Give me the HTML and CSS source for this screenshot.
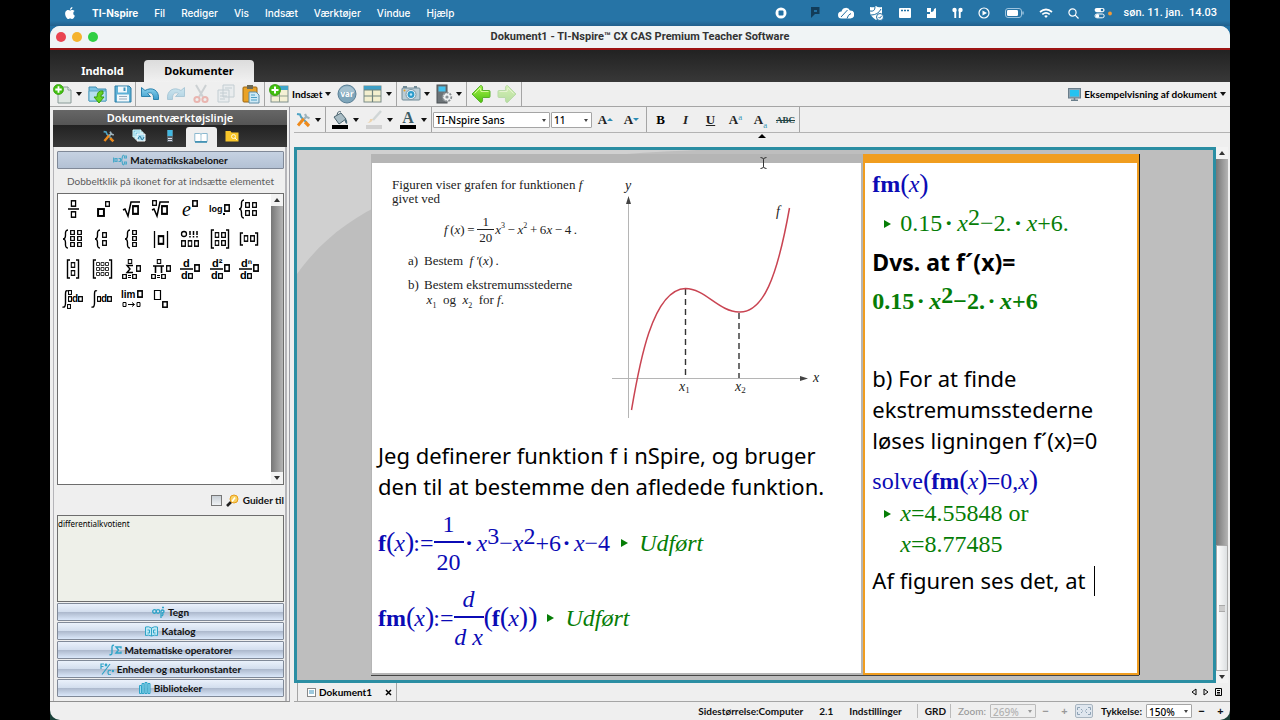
FILE: index.html
```html
<!DOCTYPE html>
<html lang="da">
<head>
<meta charset="utf-8">
<title>Dokument1 - TI-Nspire™ CX CAS Premium Teacher Software</title>
<link rel="stylesheet" href="styles.css">
</head>
<body>
<svg class="defs" aria-hidden="true">
  <defs>
    <symbol id="box" viewBox="0 0 6 7" preserveAspectRatio="none"><rect x="0.8" y="0.8" width="4.4" height="5.4" fill="#fff" stroke="#000" stroke-width="1.5"/></symbol>
    <linearGradient id="sky" x1="0" y1="0" x2="0" y2="1"><stop offset="0" stop-color="#8fd3ee"/><stop offset="1" stop-color="#3a9ccb"/></linearGradient>
    <linearGradient id="leaf" x1="0" y1="0" x2="0" y2="1"><stop offset="0" stop-color="#a5f34c"/><stop offset="1" stop-color="#4fc00f"/></linearGradient>
    <symbol id="plus" viewBox="0 0 12 12"><circle cx="6" cy="6" r="5.5" fill="#42c00f" stroke="#2e9a08" stroke-width=".8"/><path d="M6 2.5v7M2.5 6h7" stroke="#fff" stroke-width="2"/></symbol>
    <symbol id="tools" viewBox="0 0 16 16"><path d="M2 2l3 0.5 1 2.5 6 6" fill="none" stroke="#4fa3c4" stroke-width="2"/><path d="M10 10l4 4" stroke="#ee8a1c" stroke-width="3.2"/><path d="M9 6.500L3 13.500" stroke="#ee8a1c" stroke-width="3"/><path d="M9 7l3-3M10 2l1.500 3 3 1.200" fill="none" stroke="#9fb4bd" stroke-width="2.200"/></symbol>
    <symbol id="arrow" viewBox="0 0 20 20"><path d="M1 10L9.500 1.500Q12 1 11.500 6.500H18q1 0 1 1v5q0 1-1 1H11.500Q12 19 9.500 18.500z" fill="url(#leaf)" stroke="#58b32c" stroke-width="1" stroke-linejoin="round"/><path d="M3.500 9.500L9 4l1 3.500h7.500" stroke="#d5fb9a" fill="none"/></symbol>
    <symbol id="undo" viewBox="0 0 20 20"><path d="M1.500 3.500v9h9L7.500 9.500C10 8 14 8.500 13.500 15.500H18.500C19.500 6 12 2.500 5 6.500z" fill="url(#sky)" stroke="#2c82ad" stroke-width="1" stroke-linejoin="round"/></symbol>
  </defs>
</svg>

<div class="desktop">
  <nav class="menubar" aria-label="Menulinje">
    <svg class="apple" viewBox="0 0 24 24" width="12" height="12" fill="#fff"><path d="M12.152 6.896c-.948 0-2.415-1.078-3.96-1.04-2.04.027-3.91 1.183-4.961 3.014-2.117 3.675-.546 9.103 1.519 12.09 1.013 1.454 2.208 3.09 3.792 3.039 1.52-.065 2.09-.987 3.935-.987 1.831 0 2.35.987 3.96.948 1.637-.026 2.676-1.48 3.676-2.948 1.156-1.688 1.636-3.325 1.662-3.415-.039-.013-3.182-1.221-3.22-4.857-.026-3.04 2.48-4.494 2.597-4.559-1.429-2.09-3.623-2.324-4.39-2.376-2-.156-3.675 1.09-4.61 1.09zM15.53 3.83c.843-1.012 1.4-2.427 1.245-3.83-1.207.052-2.662.805-3.532 1.818-.78.896-1.454 2.338-1.273 3.714 1.338.104 2.715-.688 3.559-1.701"/></svg>
    <button class="menu menu-app">TI-Nspire</button>
    <button class="menu">Fil</button>
    <button class="menu">Rediger</button>
    <button class="menu">Vis</button>
    <button class="menu">Indsæt</button>
    <button class="menu">Værktøjer</button>
    <button class="menu">Vindue</button>
    <button class="menu">Hjælp</button>
    <div class="tray">
      <svg width="22" height="14" viewBox="0 0 22 14"><circle cx="11" cy="7" r="5.500" fill="#fff"/><rect x="8.500" y="4.500" width="5" height="5" rx="1" fill="#2270a3"/></svg>
      <svg width="16" height="14" viewBox="0 0 16 14"><path d="M4 1h8.500v7H8l-4 4z" fill="#123c59"/><path d="M7 4h3v2H7z" fill="#2270a3"/></svg>
      <svg width="16" height="14" viewBox="0 0 16 14"><path d="M3.500 12.500a3.500 3.500 0 0 1 0-7A4.500 4.500 0 0 1 12 4.500a4 4 0 0 1 .5 8z" fill="#fff"/><path d="M3 11l6.500-7M9 12.500q1-4 4-5" stroke="#2270a3" fill="none"/></svg>
      <svg width="15" height="16" viewBox="0 0 15 16"><path d="M1 2q5 1 6-1 2 2 6 1v7q-2 4-6 6-6-4-6-8z" fill="#fff"/><path d="M1 6q5 1 5-4M2 10q7 0 10-6" fill="none" stroke="#2270a3"/><circle cx="11" cy="12" r="3.500" fill="#fff" stroke="#2270a3"/><path d="M9.500 12l1.200 1.200 2-2.400" stroke="#2270a3" fill="none"/></svg>
      <svg width="12" height="12" viewBox="0 0 12 12"><rect y="1" width="12" height="10" rx="1" fill="#fff"/><path d="M2 3.500h2M5 3.500h2M8 3.500h2" stroke="#2270a3" stroke-width="1.500"/></svg>
      <svg width="11" height="12" viewBox="0 0 11 12"><path d="M1 1h4v4q3 0 3-3l2-1v10H1V7h3V5H1z" fill="#fff"/></svg>
      <svg width="11" height="12" viewBox="0 0 11 12" fill="#fff"><circle cx="2.500" cy="3" r="2.200"/><circle cx="8.500" cy="3" r="2.200"/><path d="M2.300 3h1.900v8H2.300zM6.800 3h1.900v8H6.800z"/></svg>
      <svg width="12" height="12" viewBox="0 0 12 12"><circle cx="6" cy="6" r="5" fill="none" stroke="#fff" stroke-width="1.200"/><path d="M4.500 3.500L9 6 4.500 8.500z" fill="#fff"/></svg>
      <svg width="19" height="10" viewBox="0 0 19 10"><rect x=".5" y=".5" width="16" height="9" rx="2.500" fill="none" stroke="#9cc3de"/><rect x="2" y="2" width="11" height="6" rx="1.200" fill="#fff"/><path d="M18 3.500v3" stroke="#9cc3de" stroke-width="1.400"/></svg>
      <svg width="14" height="11" viewBox="0 0 14 11" fill="none" stroke="#fff" stroke-width="1.700"><path d="M1 4q6-5 12 0M3.300 6.300q3.700-3 7.400 0"/><path d="M7 10L5.200 8q1.800-1.300 3.600 0z" fill="#fff" stroke="none"/></svg>
      <svg width="11" height="11" viewBox="0 0 11 11" fill="none" stroke="#fff" stroke-width="1.200"><circle cx="4.500" cy="4.500" r="3.600"/><path d="M7.200 7.200L10.500 10.500"/></svg>
      <svg width="18" height="12" viewBox="0 0 18 12"><rect x=".6" y="1" width="10" height="4.200" rx="2.100" fill="#fff"/><rect x="1" y="7" width="9.200" height="3.800" rx="1.900" fill="none" stroke="#fff"/><circle cx="8" cy="3" r="1.300" fill="#2270a3"/><circle cx="3.500" cy="8.900" r="1.800" fill="#fff"/><circle cx="16" cy="6.500" r="1.900" fill="#f09a38"/></svg>
      <time class="clock">søn. 11. jan.&nbsp; 14.03</time>
    </div>
  </nav>

  <div class="window">
    <header class="titlebar">
      <div class="lights"><i class="light light-close"></i><i class="light light-min"></i><i class="light light-max"></i></div>
      <h1 class="title">Dokument1 - TI-Nspire™ CX CAS Premium Teacher Software</h1>
    </header>
    <div class="tabs">
      <button class="tab">Indhold</button>
      <button class="tab tab-on">Dokumenter</button>
    </div>

    <div class="toolbar">
      <div class="group">
        <button aria-label="Ny"><svg width="20" height="20" viewBox="0 0 20 20"><path d="M5 3h10l3 3v13H5z" fill="#dfe7e3" stroke="#8a9a98"/><path d="M15 3v3h3" fill="#fff" stroke="#8a9a98"/><use href="#plus" width="11" height="11"/></svg></button><i class="caret"></i>
        <button class="gap" aria-label="Åbn"><svg width="20" height="20" viewBox="0 0 20 20"><path d="M1 3h7l1.500 2H18v12H1z" fill="#7cc4e3" stroke="#3f8db0"/><path d="M1 7h17v10H1z" fill="#b5dff0" stroke="#5aa5c6"/><path d="M15 7q-6-1-6 6H6l5 6 5-6h-3q-.5-3 2-3z" fill="#67d321" stroke="#3b9d10"/></svg></button>
        <button class="gap" aria-label="Gem"><svg width="18" height="20" viewBox="0 0 18 20"><path d="M1 2h14l2 2v14H1z" fill="#5eb1d6" stroke="#2c7ca5"/><rect x="4" y="2.500" width="9" height="6" fill="#f2f8fb"/><rect x="9.500" y="3.500" width="2" height="3.500" fill="#3c93bd"/><rect x="3" y="10.500" width="12" height="7" fill="#f2f8fb"/><path d="M5 12.500h8M5 15h8" stroke="#9ab"/></svg></button>
      </div>
      <div class="group group-wide">
        <button aria-label="Fortryd"><svg width="20" height="20"><use href="#undo"/></svg></button>
        <button class="faded" aria-label="Gentag"><svg width="20" height="20" viewBox="0 0 20 20"><g transform="matrix(-1 0 0 1 20 0)"><use href="#undo" width="20" height="20"/></g></svg></button>
        <button class="faded" aria-label="Klip"><svg width="18" height="20" viewBox="0 0 18 20" fill="none"><path d="M4 1l7 12M14 1L7 13" stroke="#8d9aa0" stroke-width="2"/><circle cx="5" cy="15.500" r="2.600" stroke="#e04c3c" stroke-width="2"/><circle cx="13" cy="15.500" r="2.600" stroke="#e04c3c" stroke-width="2"/></svg></button>
        <button class="faded" aria-label="Kopier"><svg width="20" height="20" viewBox="0 0 20 20"><path d="M7 1h11v12H7zM2 6h11v12H2z" fill="#dfe9ee" stroke="#7590a0"/><path d="M4 9h7M4 12h7M4 15h5M9 4h7" stroke="#7590a0"/></svg></button>
        <button aria-label="Sæt ind"><svg width="18" height="20" viewBox="0 0 18 20"><rect x="1" y="3" width="14" height="15" rx="1" fill="#e9a227" stroke="#9a6512"/><rect x="5" y="1" width="6" height="4" fill="#6d6a55"/><path d="M7 8h7l3 3v8H7z" fill="#cfe9f5" stroke="#5c8eaa"/><path d="M9 11h4M9 13.500h6M9 16h6" stroke="#4c9fc5"/></svg></button>
      </div>
      <div class="group">
        <button class="labelled"><svg width="20" height="20" viewBox="0 0 20 20"><rect x="2" y="2" width="17" height="16" fill="#f4f0d4" stroke="#7f8f8c"/><path d="M2 2h17v4H2z" fill="#3fa5cb"/><path d="M10.500 6v12M2 12h17" stroke="#8f9f8c"/><use href="#plus" width="12" height="12"/></svg>Indsæt</button><i class="caret"></i>
        <button class="gap" aria-label="Variabler"><svg width="20" height="20" viewBox="0 0 20 20"><circle cx="10" cy="10" r="9" fill="#7fa6bb" stroke="#5a7f95"/><path d="M2 8a8.500 8.500 0 0 1 16 0z" fill="#a3c0cf"/><text x="10" y="13" text-anchor="middle" class="svg-var">var</text></svg></button>
        <button class="gap" aria-label="Sidelayout"><svg width="20" height="20" viewBox="0 0 20 20"><rect x="1" y="2" width="17" height="16" fill="#f3efcf" stroke="#7b8c88"/><path d="M1 2h17v4H1z" fill="#3f9fc5"/><path d="M9.500 6v12M1 12h17M1 6h17" stroke="#6f837f" stroke-width="1.200"/></svg></button><i class="caret"></i>
      </div>
      <div class="group">
        <button aria-label="Skærmbillede"><svg width="20" height="20" viewBox="0 0 20 20"><rect x="1" y="4" width="18" height="12" rx="1" fill="#bccdd5" stroke="#6f8a97"/><path d="M2 3h4M13 3h3" stroke="#6f8a97" stroke-width="2"/><circle cx="10" cy="10.500" r="5" fill="#e8f1f5" stroke="#7d96a3"/><circle cx="10" cy="10.500" r="3.400" fill="#2d9ccb"/><circle cx="10" cy="10.500" r="1.200" fill="#bfe7f8"/><circle cx="3.500" cy="6.500" r="1" fill="#e9a227"/></svg></button><i class="caret"></i>
        <button class="gap" aria-label="Håndholdt"><svg width="17" height="20" viewBox="0 0 17 20"><rect x="1" y="1" width="10" height="18" fill="#6c7377" stroke="#4a5054"/><rect x="2.500" y="2.500" width="7" height="5" fill="#41c1ee"/><circle cx="11" cy="13" r="4.300" fill="#eef1f2" stroke="#888e91" stroke-width="1.800" stroke-dasharray="2 1.200"/><circle cx="11" cy="13" r="1.600" fill="#8b9296"/></svg></button><i class="caret"></i>
      </div>
      <div class="group">
        <button aria-label="Forrige"><svg width="20" height="20"><use href="#arrow"/></svg></button>
        <button class="gap faded" aria-label="Næste"><svg width="20" height="20" viewBox="0 0 20 20"><g transform="matrix(-1 0 0 1 20 0)"><use href="#arrow" width="20" height="20"/></g></svg></button>
      </div>
      <button class="labelled preview"><svg width="13" height="13" viewBox="0 0 13 13"><rect x=".5" y=".5" width="12" height="9.500" fill="#8fa5b3" stroke="#6a7e8b"/><rect x="2" y="2" width="9" height="6.500" fill="#25c2f0"/><path d="M3 12.200h7M6.500 10v2" stroke="#6a7e8b" stroke-width="1.500"/></svg>Eksempelvisning af dokument</button><i class="caret"></i>
    </div>

    <div class="main">
      <aside class="side">
        <h2 class="side-title">Dokumentværktøjslinje</h2>
        <div class="side-tabs">
          <button aria-label="Værktøjer"><svg width="13" height="13"><use href="#tools"/></svg></button>
          <button aria-label="Sidesortering"><svg width="14" height="14" viewBox="0 0 14 14"><path d="M1 1h8v7H1zM3 3h8v7H3z" fill="#7cc3de" stroke="#dff"/><path d="M5 5h8v7H5z" fill="#a5dbef" stroke="#fff"/><path d="M6 10q2-5 3-1t3-1" fill="none" stroke="#25749a"/></svg></button>
          <button aria-label="Emulator"><svg width="8" height="14" viewBox="0 0 8 14"><path d="M1 1h6v12H1z" fill="#59656b"/><path d="M1.500 1h5v6h-5z" fill="#41b8e2"/><path d="M2 9.500h4M2 11.500h4" stroke="#dde"/></svg></button>
          <button class="side-tab-on" aria-label="Hjælpeværktøjer"><svg width="14" height="11" viewBox="0 0 14 11"><path d="M.8 9.500V1.500h5q1.200 0 1.200 1 0-1 1.200-1h5v8z" fill="#fff" stroke="#8bb8cf"/><path d="M1 10h12" stroke="#2f87ad" stroke-width="1.500"/><path d="M7 2v7" stroke="#a9c9d9"/></svg></button>
          <button aria-label="Indholdsstifinder"><svg width="14" height="12" viewBox="0 0 14 12"><path d="M.5 1h5l1 1.500h7v9H.5z" fill="#f8c62a"/><circle cx="8.500" cy="6.500" r="2" fill="none" stroke="#fff8d8"/><path d="M10 8l2 2" stroke="#fff8d8"/></svg></button>
        </div>
        <div class="side-body">
          <button class="section section-on"><svg width="14" height="12" viewBox="0 0 14 12" fill="none" stroke="#4aa9c9" stroke-width="1.200"><path d="M.5 3.500v5M2 4.500h2v3H2zM5.500 4.500h2v3h-2M11 1Q9 1.500 9.300 4 9 6 8 6q1 0 1.300 2Q9 10.500 11 11M11.500 2h2v2h-2zM11.500 8h2v2h-2z"/></svg>Matematikskabeloner</button>
          <p class="hint">Dobbeltklik på ikonet for at indsætte elementet</p>
          <div class="list">
            <div class="templates">
              <svg viewBox="0 0 24 24"><path d="M7 12h11" stroke="#000" stroke-width="1.500"/><use href="#box" x="9.500" y="3" width="6" height="7"/><use href="#box" x="9.500" y="14" width="6" height="7"/></svg>
              <svg viewBox="0 0 24 24"><use href="#box" x="7" y="11" width="8" height="9"/><use href="#box" x="15" y="4" width="5" height="6"/></svg>
              <svg viewBox="0 0 24 24"><path d="M3 13l2-1 3 7L11 5h9" fill="none" stroke="#000" stroke-width="1.500"/><use href="#box" x="12" y="8" width="7" height="10"/></svg>
              <svg viewBox="0 0 24 24"><path d="M3 13l2-1 3 7L11 5h9" fill="none" stroke="#000" stroke-width="1.500"/><use href="#box" x="12" y="8" width="7" height="10"/><use href="#box" x="3" y="3" width="5" height="6"/></svg>
              <svg viewBox="0 0 24 24"><text x="4" y="19" class="svg-e">e</text><use href="#box" x="14" y="3" width="6" height="7"/></svg>
              <svg viewBox="0 0 24 24"><text x="1" y="15" class="svg-log">log</text><path d="M15 17h2" stroke="#000" stroke-width="2"/><use href="#box" x="16" y="7" width="6" height="8"/></svg>
              <svg viewBox="0 0 24 24"><path d="M7 3Q4 3 4.500 8 4.500 12 2 12q2.500 0 2.500 4Q4 21 7 21" fill="none" stroke="#000" stroke-width="1.400"/><use href="#box" x="8" y="5" width="5" height="6"/><use href="#box" x="15" y="5" width="5" height="6"/><use href="#box" x="8" y="13" width="5" height="6"/><use href="#box" x="15" y="13" width="5" height="6"/></svg>
              <svg viewBox="0 0 24 24"><path d="M7 3Q4 3 4.500 8 4.500 12 2 12q2.500 0 2.500 4Q4 21 7 21" fill="none" stroke="#000" stroke-width="1.400"/><use href="#box" x="9" y="3" width="5" height="5"/><use href="#box" x="16" y="3" width="5" height="5"/><use href="#box" x="9" y="9" width="5" height="5"/><use href="#box" x="16" y="9" width="5" height="5"/><use href="#box" x="9" y="15" width="5" height="5"/><use href="#box" x="16" y="15" width="5" height="5"/></svg>
              <svg viewBox="0 0 24 24"><path d="M10 3Q7 3 7.500 8 7.500 12 5 12q2.500 0 2.500 4Q7 21 10 21" fill="none" stroke="#000" stroke-width="1.400"/><use href="#box" x="12" y="5" width="5" height="6"/><use href="#box" x="12" y="13" width="5" height="6"/></svg>
              <svg viewBox="0 0 24 24"><path d="M10 3Q7 3 7.500 8 7.500 12 5 12q2.500 0 2.500 4Q7 21 10 21" fill="none" stroke="#000" stroke-width="1.400"/><use href="#box" x="12" y="3" width="5" height="5"/><use href="#box" x="12" y="9" width="5" height="5"/><use href="#box" x="12" y="15" width="5" height="5"/></svg>
              <svg viewBox="0 0 24 24"><path d="M5.500 4v17M18.500 4v17" stroke="#000" stroke-width="1.300"/><use href="#box" x="8.500" y="8" width="7" height="10"/></svg>
              <svg viewBox="0 0 24 24"><circle cx="6" cy="7" r="2.500" fill="none" stroke="#000" stroke-width="1.300"/><path d="M12 4v4M15.500 4v4M19 4v4M12 9v1.500M15.500 9v1.500M19 9v1.500" stroke="#000" stroke-width="1.500"/><use href="#box" x="3" y="13" width="5" height="7"/><use href="#box" x="9.500" y="13" width="5" height="7"/><use href="#box" x="16" y="13" width="5" height="7"/></svg>
              <svg viewBox="0 0 24 24"><path d="M6 3H3.500v18H6M18 3h2.500v18H18" fill="none" stroke="#000" stroke-width="1.400"/><use href="#box" x="6.500" y="5" width="5" height="6"/><use href="#box" x="13" y="5" width="5" height="6"/><use href="#box" x="6.500" y="13" width="5" height="6"/><use href="#box" x="13" y="13" width="5" height="6"/></svg>
              <svg viewBox="0 0 24 24"><path d="M6 6H3.500v12H6M18 6h2.500v12H18" fill="none" stroke="#000" stroke-width="1.400"/><use href="#box" x="6.500" y="8" width="5" height="7"/><use href="#box" x="13" y="8" width="5" height="7"/></svg>
              <svg viewBox="0 0 24 24"><path d="M9 3H6.500v18H9M15 3h2.500v18H15" fill="none" stroke="#000" stroke-width="1.400"/><use href="#box" x="9.500" y="5" width="5" height="6"/><use href="#box" x="9.500" y="13" width="5" height="6"/></svg>
              <svg viewBox="0 0 24 24"><path d="M6 3H3.500v18H6M19 3h2.500v18H19" fill="none" stroke="#000" stroke-width="1.400"/><g fill="none" stroke="#333"><path d="M6.500 5.500h3v3h-3zM11 5.500h3v3h-3zM15.500 5.500h3v3h-3zM6.500 10.500h3v3h-3zM11 10.500h3v3h-3zM15.500 10.500h3v3h-3zM6.500 15.500h3v3h-3zM11 15.500h3v3h-3zM15.500 15.500h3v3h-3z"/></g></svg>
              <svg viewBox="0 0 24 24"><path d="M13 8.500H7l3 3.500-3 3.500h6" fill="none" stroke="#000" stroke-width="1.400"/><use href="#box" x="7.500" y="2" width="5" height="5"/><use href="#box" x="2" y="17" width="5" height="5"/><path d="M8 18.500h3M8 20.500h3" stroke="#000"/><use href="#box" x="12" y="17" width="5" height="5"/><use href="#box" x="16" y="8" width="5" height="7"/></svg>
              <svg viewBox="0 0 24 24"><path d="M4 9h11M6.500 9v7M12.500 9v7" fill="none" stroke="#000" stroke-width="1.600"/><use href="#box" x="7.500" y="2" width="5" height="5"/><use href="#box" x="2" y="17" width="5" height="5"/><path d="M8 18.500h3M8 20.500h3" stroke="#000"/><use href="#box" x="12" y="17" width="5" height="5"/><use href="#box" x="17" y="8" width="5" height="7"/></svg>
              <svg viewBox="0 0 24 24"><text x="5" y="10" class="svg-d">d</text><path d="M2 12h13" stroke="#000" stroke-width="1.500"/><text x="3" y="22" class="svg-d">d</text><use href="#box" x="10" y="16" width="5" height="6"/><use href="#box" x="16" y="7" width="6" height="8"/></svg>
              <svg viewBox="0 0 24 24"><text x="4" y="10" class="svg-d">d²</text><path d="M2 12h13" stroke="#000" stroke-width="1.500"/><text x="3" y="22" class="svg-d">d</text><use href="#box" x="10" y="16" width="5" height="6"/><use href="#box" x="16" y="7" width="6" height="8"/></svg>
              <svg viewBox="0 0 24 24"><text x="4" y="10" class="svg-d">dⁿ</text><path d="M2 12h13" stroke="#000" stroke-width="1.500"/><text x="3" y="22" class="svg-d">d</text><use href="#box" x="10" y="16" width="5" height="6"/><use href="#box" x="16" y="7" width="6" height="8"/></svg>
              <svg viewBox="0 0 24 24"><path d="M7 4Q4.500 2.500 4.500 7v9q0 5-3 4" fill="none" stroke="#000" stroke-width="1.400"/><use href="#box" x="7" y="3" width="4" height="5"/><use href="#box" x="7" y="9" width="4" height="6"/><use href="#box" x="6" y="17" width="4" height="5"/><text x="11" y="15" class="svg-s">d</text><use href="#box" x="17" y="9" width="5" height="6"/></svg>
              <svg viewBox="0 0 24 24"><path d="M7 4Q4.500 2.500 4.500 7v9q0 5-3 4" fill="none" stroke="#000" stroke-width="1.400"/><use href="#box" x="7" y="9" width="4" height="6"/><text x="11" y="15" class="svg-s">d</text><use href="#box" x="17" y="9" width="5" height="6"/></svg>
              <svg viewBox="0 0 24 24"><text x="1" y="11" class="svg-s">lim</text><use href="#box" x="17" y="3" width="6" height="8"/><path d="M3 15.500h3v4H3zM17 15.500h3v4h-3zM8 17.500h6M12 15.500l2.500 2-2.500 2" fill="none" stroke="#000"/></svg>
              <svg viewBox="0 0 24 24"><path d="M5.500 3.500h6v9h-6z" fill="none" stroke="#000" stroke-width="1.200"/><use href="#box" x="13" y="14" width="6" height="7"/></svg>
            </div>
            <div class="scroll"><i class="up"></i><i class="track"></i><i class="down"></i></div>
          </div>
          <label class="guide"><input type="checkbox"><svg width="13" height="13" viewBox="0 0 13 13"><path d="M1 12l5-5" stroke="#222" stroke-width="2.600"/><circle cx="8" cy="5" r="4" fill="#f9d263" stroke="#e79c1b"/><path d="M6 7.500l3-4" stroke="#fff" stroke-width="1.500"/></svg>Guider til</label>
          <div class="info">differentialkvotient</div>
          <div class="sections">
            <button class="section"><svg width="13" height="12" viewBox="0 0 13 12" fill="none" stroke="#2fa4c8" stroke-width="1.300"><circle cx="2.500" cy="5.500" r="1.800"/><circle cx="6" cy="5.500" r="1.800"/><path d="M9 12V5q1.500-2 3 0 0 2-2 2 2 1 0 3M10 1.500h2"/></svg>Tegn</button>
            <button class="section"><svg width="13" height="12" viewBox="0 0 13 12" fill="#bfe8f5" stroke="#2fa4c8"><path d="M.5 2q3-1 6 1 3-2 6-1v8.500q-3-1-6 .5-3-1.500-6-.5zM6.500 3v8"/><path d="M2.500 5h2v3h-2M10.500 5h-2v3h2" fill="none"/></svg>Katalog</button>
            <button class="section"><svg width="13" height="12" viewBox="0 0 13 12" fill="none" stroke="#2fa4c8" stroke-width="1.400"><path d="M5 1.500q-2-1-2 2v5q0 3-2.500 2M12 4.500V3H7l2.500 3L7 9h5V7.500"/></svg>Matematiske operatorer</button>
            <button class="section"><svg width="14" height="12" viewBox="0 0 14 12" fill="none" stroke="#2fa4c8" stroke-width="1.200"><path d="M1 6V1h3M1 3.500h2.500M2 11.500L10 1M11 7.500q-3-1-3 2t3 2"/><circle cx="6" cy="2" r=".8"/><circle cx="13" cy="8" r=".6"/></svg>Enheder og naturkonstanter</button>
            <button class="section"><svg width="12" height="12" viewBox="0 0 12 12" fill="#9bdcf0" stroke="#2fa4c8"><path d="M.5 3.500h2v8h-2zM3 1.500h2v10H3zM6 .5h2v11H6zM9 1.500h2v10H9z"/></svg>Biblioteker</button>
          </div>
        </div>
      </aside>

      <section class="work">
        <div class="format">
          <div class="fgroup f1"><button aria-label="Værktøjer"><svg width="16" height="16"><use href="#tools"/></svg></button><i class="caret"></i></div>
          <div class="fgroup f2">
            <button aria-label="Fyldfarve"><svg width="18" height="20" viewBox="0 0 18 20"><path d="M3 7l7-4 5 6-7 5z" fill="#a8bcc4" stroke="#4c6570"/><path d="M6 5q1-5 4-3" fill="none" stroke="#4c6570"/><path d="M14 8q3 2 2 6-3-1-2-6z" fill="#52707e"/><path d="M1 17h16" stroke="#000" stroke-width="4"/></svg></button><i class="caret"></i>
            <button class="faded" aria-label="Stregfarve"><svg width="18" height="20" viewBox="0 0 18 20"><path d="M16 1L8 10" stroke="#9aa" stroke-width="2.500"/><path d="M8 9q-1 4-6 4 3-1 3-4z" fill="#e8a53a"/><path d="M1 17h16" stroke="#999" stroke-width="4"/></svg></button><i class="caret"></i>
            <button aria-label="Tekstfarve"><svg width="18" height="20" viewBox="0 0 18 20"><text x="9" y="13" text-anchor="middle" class="svg-A">A</text><path d="M1 17h16" stroke="#000" stroke-width="4"/></svg></button><i class="caret"></i>
          </div>
          <div class="fgroup f3">
            <span class="combo combo-font"><select aria-label="Skrifttype"><option>TI-Nspire Sans</option></select></span>
            <span class="combo combo-size"><select aria-label="Skriftstørrelse"><option>11</option></select></span>
            <button class="fbtn" aria-label="Større skrift">A<i class="mini mini-up"></i></button>
            <button class="fbtn" aria-label="Mindre skrift">A<i class="mini mini-down"></i></button>
          </div>
          <div class="fgroup f4">
            <button class="fbtn"><b>B</b></button>
            <button class="fbtn"><em>I</em></button>
            <button class="fbtn"><u>U</u></button>
            <button class="fbtn">A<sup>a</sup></button>
            <button class="fbtn">A<sub>a</sub></button>
            <button class="fbtn fbtn-abc"><s>ABC</s></button>
          </div>
        </div>
        <div class="collapse"><i></i></div>
        <div class="viewport">
          <div class="canvas">
            <svg class="wallpaper" viewBox="0 0 917 530" preserveAspectRatio="xMinYMin slice"><path d="M0 0H917V530H0z" fill="#bebebe"/><path d="M0 0H400C170 10 60 40 0 124z" fill="#d0d0d0"/></svg>
            <div class="page">
              <article class="pane">
                <div class="exercise">
                  <div class="task">
                    <p>Figuren viser grafen for funktionen <em>f</em><br>givet ved</p>
                    <p class="task-eq"><em>f</em>&thinsp;(<em>x</em>)&thinsp;=&thinsp;<span class="frac frac-s"><span>1</span><span>20</span></span><em>x</em><sup>3</sup>&thinsp;−&thinsp;<em>x</em><sup>2</sup>&thinsp;+&thinsp;6<em>x</em>&thinsp;−&thinsp;4&thinsp;.</p>
                    <ol class="task-list">
                      <li>Bestem &nbsp;<em>f&thinsp;′</em>(<em>x</em>)&thinsp;.</li>
                      <li>Bestem ekstremumsstederne<br>&thinsp;<em>x</em><sub>1</sub>&nbsp; og &nbsp;<em>x</em><sub>2</sub>&nbsp; for <em>f</em>.</li>
                    </ol>
                  </div>
                  <svg class="graph" viewBox="0 0 220 250" width="220" height="250">
                    <path d="M21.500 28V247M5 207.500H197" stroke="#b5b5b5" stroke-width="1"/>
                    <path d="M21.500 25l-2.500 8h5zM201 207.500l-8-2.500v5z" fill="#444"/>
                    <path d="M78.500 118V207M132 142V207" stroke="#333" stroke-width="1.400" stroke-dasharray="6 4"/>
                    <path d="M24.500 239C32 195 45 118.500 78.500 117.500C98 117.500 112 141 132 141C156 142 170 107 182.500 37" fill="none" stroke="#c94452" stroke-width="1.500"/>
                    <text x="18" y="19" class="svg-ax">y</text><text x="169" y="45" class="svg-ax">f</text><text x="206" y="211" class="svg-ax">x</text>
                    <text x="72" y="220" class="svg-ax">x<tspan class="svg-ix" dy="2">1</tspan></text><text x="128" y="220" class="svg-ax">x<tspan class="svg-ix" dy="2">2</tspan></text>
                  </svg>
                </div>
                <p class="note">Jeg definerer funktion f i nSpire, og bruger<br>den til at bestemme den afledede funktion.</p>
                <div class="math math-1"><b>f</b><span class="par">(</span><em>x</em><span class="par">)</span>:=<span class="frac"><span>1</span><span>20</span></span><span class="dot">·</span><em>x</em><sup>3</sup>−<em>x</em><sup>2</sup>+6<span class="dot">·</span><em>x</em>−4<i class="play"></i><em class="ans">Udført</em></div>
                <div class="math math-2"><b>fm</b><span class="par">(</span><em>x</em><span class="par">)</span>:=<span class="frac"><em>d</em><em>d x</em></span><span class="par">(</span><b>f</b><span class="par">(</span><em>x</em><span class="par">))</span><i class="play"></i><em class="ans">Udført</em></div>
              </article>
              <article class="pane pane-on">
                <div class="math row"><b>fm</b><span class="par">(</span><em>x</em><span class="par">)</span></div>
                <div class="math row green"><i class="play play-in"></i>0.15<span class="dot">·</span><em>x</em><sup>2</sup>−2.<span class="dot">·</span><em>x</em>+6.</div>
                <p class="note row"><b>Dvs. at f´(x)=</b></p>
                <div class="math row green heavy">0.15<span class="dot">·</span><em>x</em><sup>2</sup>−2.<span class="dot">·</span><em>x</em>+6</div>
                <p class="note note-b">b) For at finde<br>ekstremumsstederne<br>løses ligningen f´(x)=0</p>
                <div class="math solve">solve<span class="par">(</span><b>fm</b><span class="par">(</span><em>x</em><span class="par">)</span>=0,<em>x</em><span class="par">)</span></div>
                <div class="math green"><i class="play play-in"></i><em>x</em>=4.55848 or</div>
                <div class="math green indent"><em>x</em>=8.77485</div>
                <p class="note row row-last">Af figuren ses det, at <i class="cursor"></i></p>
              </article>
            </div>
            <svg class="ibeam" width="7" height="12" viewBox="0 0 7 12" fill="none" stroke="#333"><path d="M.5 .5q3 0 3 2v7q0 2-3 2M6.500 .5q-3 0-3 2v7q0 2 3 2"/></svg>
          </div>
          <div class="scroll scroll-main"><i class="up"></i><i class="track"></i><i class="thumb"></i><i class="down"></i></div>
        </div>
        <div class="doctabs">
          <div class="doctab"><svg width="9" height="9" viewBox="0 0 9 9"><rect x=".5" y=".5" width="8" height="8" fill="#fff" stroke="#888"/><path d="M2 3h5M2 5h5" stroke="#3c93bd"/></svg>Dokument1<button aria-label="Luk"><svg width="7" height="7" viewBox="0 0 7 7"><path d="M1 1l5 5M6 1L1 6" stroke="#000" stroke-width="1.500"/></svg></button></div>
          <div class="nav">
            <button aria-label="Forrige"><svg width="6" height="8" viewBox="0 0 6 8"><path d="M5 1v6L1 4z" fill="none" stroke="#000"/></svg></button>
            <button aria-label="Næste"><svg width="6" height="8" viewBox="0 0 6 8"><path d="M1 1v6l4-3z" fill="none" stroke="#000"/></svg></button>
            <button aria-label="Liste"><svg width="7" height="8" viewBox="0 0 7 8"><path d="M.5 .5h6v7h-6zM2 2.500h3M2 4.500h3M2 6h3" fill="none" stroke="#000"/></svg></button>
          </div>
        </div>
      </section>
    </div>

    <footer class="status">
      <span class="st-size">Sidestørrelse:Computer</span>
      <span class="st-page">2.1</span>
      <button class="st-set">Indstillinger</button>
      <span class="st-grd">GRD</span>
      <label class="off">Zoom: <span class="combo combo-s combo-off"><select disabled><option>269%</option></select></span></label>
      <button class="pm off" disabled>−</button><button class="pm off" disabled>+</button>
      <button class="fit" aria-label="Tilpas" disabled><svg width="14" height="8" viewBox="0 0 14 8" fill="none" stroke="#8ea3b5"><path d="M3 .5H.5V3M.5 5v2.500H3M11 .500h2.500V3M13.500 5v2.500H11M4 2l1.500 1.500M10 2L8.500 3.500M4 6l1.500-1.500M10 6L8.500 4.500"/></svg></button>
      <label>Tykkelse: <span class="combo combo-s"><select><option>150%</option></select></span></label>
      <button class="pm">−</button><button class="pm">+</button>
    </footer>
  </div>
</div>
</body>
</html>
```

FILE: styles.css
```css
* { box-sizing: border-box; }
html, body { height: 100%; }
body {
  margin: 0;
  padding: 0 50px;
  background: #000;
  font: 700 10px/14px Lato, "Noto Sans", sans-serif;
  color: #111;
}
p, h1, h2, ol { margin: 0; padding: 0; }
button {
  display: inline-flex;
  align-items: center;
  justify-content: center;
  margin: 0;
  padding: 0;
  border: 0;
  background: none;
  font: inherit;
  color: inherit;
}
svg { display: block; flex: none; }
.defs { position: absolute; width: 0; height: 0; }

/* Lettering inside icons and the graph */
.svg-var { font: 700 8px "Noto Sans", sans-serif; fill: #fff; }
.svg-e { font: italic 400 20px "Liberation Serif", serif; }
.svg-log { font: 700 9px "Liberation Sans", sans-serif; }
.svg-d { font: 700 11px "Liberation Sans", sans-serif; }
.svg-s { font: 700 10px "Liberation Sans", sans-serif; }
.svg-A { font: 700 16px "Liberation Serif", serif; fill: #3d5c66; }
.svg-ax { font: italic 14px "Liberation Serif", serif; fill: #222; }
.svg-ix { font: 9px "Liberation Serif", serif; }

.desktop { height: 100vh; display: flex; flex-direction: column; background: linear-gradient(#2270a3 50%, #1a4038); }

/* System menu bar */
.menubar {
  height: 26px;
  flex: none;
  display: flex;
  align-items: center;
  gap: 16px;
  padding: 0 13px 0 14px;
  background: linear-gradient(#2674a6 80%, #215f8c);
  color: #fff;
  font: 500 10px/14px Inter, sans-serif;
}
.menu-app { font-weight: 700; }
.tray { margin-left: auto; display: flex; align-items: center; gap: 15px; }
.clock { white-space: nowrap; margin-left: -3px; font: 500 11px/14px Roboto, sans-serif; }

/* Window frame */
.window {
  flex: 1;
  min-height: 0;
  display: flex;
  flex-direction: column;
  border-radius: 10px;
  overflow: hidden;
  background: #efefef;
}
.titlebar {
  height: 24px;
  flex: none;
  display: grid;
  grid-template-columns: 1fr auto 1fr;
  align-items: center;
  background: #f0f4f5;
  border-bottom: 2px solid #9c1414;
}
.lights { display: flex; gap: 6px; padding-left: 6px; }
.light { width: 10px; height: 10px; border-radius: 50%; }
.light-close { background: #ea4450; }
.light-min { background: #f5b32d; }
.light-max { background: #2fcf42; }
.title { font: 700 11px/14px Roboto, sans-serif; color: #333; }
.tabs {
  height: 32px;
  flex: none;
  display: flex;
  align-items: flex-end;
  gap: 11px;
  padding-left: 22px;
  background: linear-gradient(#222, #383838);
}
.tab { height: 22px; width: 61px; font: 700 11px/14px "Noto Sans", sans-serif; color: #fff; }
.tab-on {
  width: 110px;
  border-radius: 4px 4px 0 0;
  background: linear-gradient(#dcdcdc, #f1f1f1);
  color: #000;
}

/* Main toolbar */
.toolbar {
  height: 25px;
  flex: none;
  display: flex;
  align-items: center;
  padding: 0 4px 0 2px;
  border-bottom: 1px solid #a5a5a5;
}
.group { height: 100%; display: flex; align-items: center; padding: 0 4px; border-right: 1px solid #a5a5a5; }
.group:first-child { padding: 0 3px 0 1px; }
.group-wide { gap: 6px; padding: 0 4px; }
.gap { margin-left: 6px; }
.faded { opacity: .35; }
.labelled { gap: 3px; color: #000; }
.preview { margin-left: auto; }
.caret {
  flex: none;
  margin-left: 3px;
  border: 3px solid transparent;
  border-top: 4px solid #111;
  border-bottom: 0;
}

.main { flex: 1; min-height: 0; display: flex; }

/* Document toolbox */
.side {
  width: 240px;
  flex: none;
  display: flex;
  flex-direction: column;
  padding: 3px 2px 0 3px;
  border-bottom: 1px solid #8f8f8f;
  border-right: 1px solid #9d9da5;
}
.side-title {
  background: linear-gradient(#666, #555);
  color: #fff;
  text-align: center;
  font: 600 11px/15px "Noto Sans", sans-serif;
}
.side-tabs {
  height: 22px;
  flex: none;
  display: grid;
  grid-template-columns: repeat(5, 31px);
  justify-content: center;
  background: linear-gradient(#222, #383838);
}
.side-tab-on { background: #eee; border-radius: 3px 3px 0 0; margin-top: 2px; }
.side-body {
  flex: 1;
  min-height: 0;
  display: flex;
  flex-direction: column;
  padding: 4px 1px 4px 3px;
  border: 1px solid #b5b5b9;
  border-width: 0 2px 0 1px;
}
.section {
  height: 18px;
  flex: none;
  width: 100%;
  gap: 3px;
  border: 1px solid #808998;
  border-radius: 1px;
  background: linear-gradient(#eaf1fb, #d3deee 48%, #adb9cd 52%, #dbe8fa);
  color: #111;
}
.section-on { background: linear-gradient(#c6d2e2, #b3c1d4); }
.hint { padding: 5px 0; text-align: center; color: #5b5b5b; font-size: 10px; font-weight: 400; white-space: nowrap; }
.list { flex: 1; min-height: 0; display: flex; border: 1px solid #6d6d6d; background: #fff; }
.templates {
  flex: 1;
  display: grid;
  grid-template-columns: repeat(7, 1fr);
  grid-auto-rows: 30px;
  align-content: start;
  justify-items: center;
  align-items: center;
  padding-right: 7px;
}
.templates svg { width: 24px; height: 24px; }
.scroll { width: 12px; display: flex; flex-direction: column; align-items: center; background: #f3f3f3; }
.up, .down { height: 12px; flex: none; display: grid; place-items: center; }
.up::before, .down::before { content: ""; border: 3px solid transparent; border-top-width: 0; border-bottom: 4px solid #333; }
.down::before { border-bottom-width: 0; border-top: 4px solid #333; }
.track { flex: 1; width: 100%; background: linear-gradient(90deg, #777, #b5b5b5); }
.guide { display: flex; align-items: center; justify-content: flex-end; gap: 4px; height: 30px; }
.guide input {
  appearance: none;
  width: 11px;
  height: 11px;
  margin: 0;
  border: 1px solid #777;
  background: linear-gradient(#c9d0d6, #eef1f4);
}
.info { height: 87px; border: 1px solid #6d6d6d; background: #eef0e9; font: 8px/13px "Noto Sans", sans-serif; color: #000; padding-top: 1px; }
.sections { display: flex; flex-direction: column; gap: 1px; padding-top: 1px; }

/* Text formatting bar */
.work { flex: 1; min-width: 0; display: flex; flex-direction: column; padding-left: 4px; }
.format { height: 26px; flex: none; display: flex; align-items: center; border-bottom: 1px solid #b3b3b3; }
.fgroup { height: 100%; display: flex; align-items: center; border-right: 1px solid #a5a5a5; }
.f1 { padding: 0 4px 0 1px; }
.f2 { padding: 0 4px 0 5px; }
.f2 button + .caret + button { margin-left: 6px; }
.f2 .caret, .f1 .caret { margin-left: 4px; }
.f3 { padding: 0 2px 0 1px; gap: 1px; }
.f4 { padding: 0 1px; }
.combo { position: relative; display: inline-flex; }
.combo::after {
  content: "";
  position: absolute;
  right: 4px;
  top: 7px;
  border: 2px solid transparent;
  border-top: 3px solid #444;
  border-bottom: 0;
  pointer-events: none;
}
.combo select {
  appearance: none;
  width: 100%;
  height: 16px;
  margin: 0;
  padding: 0 2px;
  border: 1px solid #a5a5a5;
  border-radius: 1px;
  background: #fff;
  font: 500 10px/14px "Noto Sans", sans-serif;
  color: #000;
}
.combo-font { width: 117px; }
.combo-size { width: 41px; }
.fbtn { width: 25px; height: 22px; font: 600 13px/16px "Liberation Serif", serif; color: #222; }
.fbtn b { color: #000; font-weight: 700; }
.fbtn sup, .fbtn sub { font-size: 9px; line-height: 0; color: #3a97b8; font-weight: 400; }
.fbtn sup { align-self: flex-start; padding-top: 8px; }
.fbtn sub { align-self: flex-end; padding-bottom: 6px; }
.fbtn-abc { font-size: 9px; color: #244; }
.mini { border: 3px solid transparent; }
.mini-up { border-top: 0; border-bottom: 3px solid #2b8db5; }
.mini-down { border-bottom: 0; border-top: 3px solid #2b8db5; }
.collapse { height: 14px; flex: none; display: flex; padding-left: 464px; }
.collapse i { height: 0; margin-top: 1px; border: 4px solid transparent; border-top: 0; border-bottom: 4px solid #000; }

/* Document view */
.viewport { flex: 1; min-height: 0; display: flex; padding-right: 2px; }
.canvas {
  flex: 1;
  min-width: 0;
  position: relative;
  display: flex;
  padding: 4px 74px;
  border: 3px solid #2b8ea3;
  box-shadow: inset 0 1px #a5dbe5;
  background: #bebebe;
}
.wallpaper { position: absolute; inset: 0; width: 100%; height: 100%; }
.page {
  position: relative;
  flex: 1;
  min-width: 0;
  display: grid;
  grid-template-columns: 493fr 276fr;
  border-bottom: 1px solid #444;
  background: #b5b5b5;
}
.pane { min-width: 0; margin: 9px 2px 2px 1px; padding: 0 6px; background: #fff; overflow: hidden; }
.pane-on { margin: 0; padding: 2px 7px 0; border: 2px solid #f09d1f; border-top-width: 9px; box-shadow: 1px 0 #222; }
.ibeam { position: absolute; left: 463px; top: 7px; }

.exercise { display: flex; height: 277px; }
.task { width: 228px; flex: none; padding: 15px 0 0 14px; font: 13px/14px "Liberation Serif", serif; color: #222; white-space: nowrap; }
.task sup, .task sub { font-size: 8px; line-height: 0; }
.task-eq { display: flex; align-items: center; height: 47px; padding-left: 52px; }
.task-eq sup { align-self: center; padding-bottom: 8px; }
.task-list { counter-reset: task; list-style: none; padding-left: 32px; }
.task-list li { counter-increment: task; line-height: 15px; margin-bottom: 9px; }
.task-list li::before { content: counter(task, lower-alpha) ") "; display: inline-block; width: 16px; margin-left: -16px; }
.graph { margin: 8px 0 0 1px; }

.note { font: 400 22px/31px "Noto Sans", sans-serif; color: #000; white-space: nowrap; }
.note b { font-size: 23px; font-weight: 700; }
.math { display: flex; align-items: center; font: 24px/31px "Liberation Serif", serif; color: #0b0bb5; white-space: nowrap; }
.math sup { font-size: 24px; line-height: 16px; padding-bottom: 14px; }
.par { font-size: 28px; line-height: 28px; margin-right: -1px; padding-bottom: 2px; }
.dot { width: 13px; padding-right: 2px; text-align: center; font-weight: 700; }
.frac { display: flex; flex-direction: column; align-items: center; min-width: 30px; }
.frac > :first-child { align-self: stretch; text-align: center; border-bottom: 2px solid currentColor; line-height: 30px; padding-bottom: 2px; }
.frac > :last-child { line-height: 30px; padding-top: 4px; }
.frac-s { min-width: 17px; margin-right: 1px; }
.frac-s > :first-child { border-bottom-width: 1px; line-height: 14px; padding: 0; }
.frac-s > :last-child { line-height: 14px; padding: 1px 0 0; }
.math-1 { margin-top: 8px; height: 66px; }
.math-2 { margin-top: 9px; height: 66px; }
.play { border: 4px solid transparent; border-left: 7px solid #067d06; border-right: 0; margin: 0 11px; }
.play-in { margin: 0 9px 0 12px; }
.ans, .green { color: #067d06; }
.green .dot { width: 15px; }
.heavy { font-weight: 700; }
.row { height: 39px; display: flex; align-items: center; }
.note-b { margin-top: 42px; }
.solve { height: 42px; padding-top: 8px; }
.indent { padding-left: 28px; }
.row-last { margin-top: 1px; }
.cursor { width: 1px; height: 30px; margin-left: 9px; background: #000; }

.scroll-main { background: #f3f3f3; }
.thumb { width: 100%; flex: none; height: 126px; border: 1px solid #aaa; background: linear-gradient(90deg, #fff, #dde0e2); display: grid; place-items: center; }
.thumb::before { content: ""; width: 6px; height: 5px; border: 1px solid #aaa; border-width: 1px 0; background: #ccc; }

/* Document tabs and status bar */
.doctabs { height: 19px; flex: none; display: flex; align-items: stretch; justify-content: space-between; padding: 0 8px 0 3px; border-bottom: 1px solid #a5a5a5; }
.doctab { display: flex; align-items: center; gap: 3px; padding: 0 4px 0 9px; border: 1px solid #a5a5a5; border-width: 0 1px; color: #000; }
.doctab button { margin-left: 10px; }
.nav { display: flex; gap: 6px; }
.status { height: 18px; flex: none; display: flex; align-items: center; justify-content: flex-end; color: #111; }
.status label { display: flex; align-items: center; gap: 4px; }
.st-size { margin-right: 16px; }
.st-page { margin-right: 16px; }
.st-set { padding-right: 15px; border-right: 1px solid #bbb; }
.st-grd { margin-left: 7px; padding-right: 4px; margin-right: 7px; border-right: 1px solid #bbb; }
.off { color: #999; font-weight: 500; }
.combo-s { width: 46px; }
.combo-s select { height: 14px; }
.combo-s::after { top: 6px; }
.combo-off select { background: #eee; color: #999; }
.combo-off::after { opacity: .5; }
.pm { width: 19px; font: 700 11px/14px "Noto Sans", sans-serif; }
.fit { width: 18px; height: 14px; margin: 0 8px 0 1px; border: 1px solid #a9b5c0; border-radius: 2px; background: #dfe6ee; }
```
